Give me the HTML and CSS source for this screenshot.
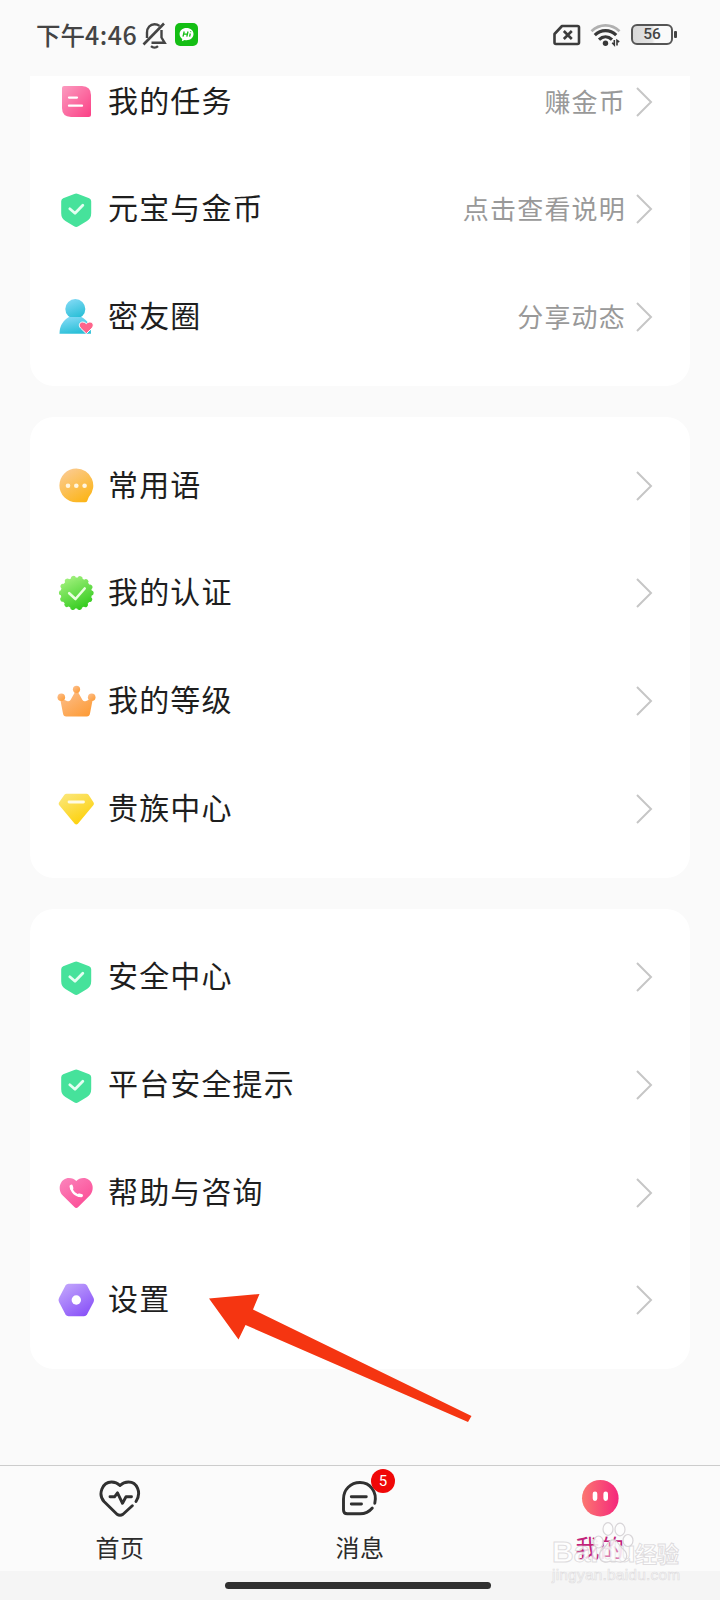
FILE: index.html
```html
<!DOCTYPE html>
<html lang="zh-CN">
<head>
<meta charset="utf-8">
<title>我的</title>
<link rel="stylesheet" href="styles.css">
</head>
<body>
<svg width="0" height="0" class="defs" aria-hidden="true">
  <defs>
    <linearGradient id="gPink" x1="0" y1="0" x2="1" y2="1"><stop offset="0" stop-color="#fb9cc0"/><stop offset="1" stop-color="#fb3f85"/></linearGradient>
    <linearGradient id="gBlue" x1="0" y1="0" x2="0.4" y2="1"><stop offset="0" stop-color="#8adcf8"/><stop offset="1" stop-color="#2cc0d8"/></linearGradient>
    <linearGradient id="gOrange" x1="0.2" y1="0" x2="0.8" y2="1"><stop offset="0" stop-color="#fbcb92"/><stop offset="1" stop-color="#fcb414"/></linearGradient>
    <linearGradient id="gGreen" x1="0.2" y1="0" x2="0.7" y2="1"><stop offset="0" stop-color="#a0f07c"/><stop offset="1" stop-color="#36cc20"/></linearGradient>
    <linearGradient id="gCrown" x1="0" y1="0" x2="0.8" y2="1"><stop offset="0" stop-color="#fcc294"/><stop offset="1" stop-color="#fd9c38"/></linearGradient>
    <linearGradient id="gYellow" x1="0.1" y1="0" x2="0.7" y2="1"><stop offset="0" stop-color="#fbe77c"/><stop offset="1" stop-color="#fdd005"/></linearGradient>
    <linearGradient id="gHeart" x1="0" y1="0" x2="0.8" y2="1"><stop offset="0" stop-color="#fb86bd"/><stop offset="1" stop-color="#fc4a94"/></linearGradient>
    <linearGradient id="gPurple" x1="0.1" y1="0" x2="0.8" y2="1"><stop offset="0" stop-color="#c3a8fc"/><stop offset="1" stop-color="#8850f8"/></linearGradient>
    <linearGradient id="gFace" x1="0" y1="0" x2="1" y2="0"><stop offset="0" stop-color="#fb7770"/><stop offset="1" stop-color="#f5267c"/></linearGradient>
    <symbol id="chev" viewBox="0 0 18 32"><path d="M2 2 16 16 2 30" fill="none" stroke="#c6c6c6" stroke-width="2"/></symbol>
    <symbol id="shield" viewBox="0 0 40 40"><path d="M18.3 4.9Q20.2 4 22.1 4.9L33.2 9.3Q35.2 10.1 35.2 12.2V24.2Q35.2 29.3 31 32L22.3 37.3Q20.2 38.5 18.1 37.3L9.4 32Q5.2 29.3 5.2 24.2V12.2Q5.2 10.1 7.2 9.3Z" fill="#46e29b"/><path d="M13.8 19.8 19 24.2 26.8 16.3" fill="none" stroke="#e4fff2" stroke-width="2.8" stroke-linecap="round" stroke-linejoin="round"/></symbol>
  </defs>
</svg>
<div class="screen">
  <header class="status">
    <span class="time">下午<b>4:46</b></span>
    <svg class="bell" width="25" height="27" viewBox="0 0 25 27" fill="none" stroke="#444" stroke-width="2.4"><path d="M5 16V10.500C5 5.500 8.300 2.200 12.500 2.200c2 0 3.600.6 5 1.700M19.500 8v7.500l3.200 5.300H9.500"/><path d="M1.500 22.500 22 1.500" stroke-width="2.600"/><path d="M9 24.200c2 1.800 5 1.800 7 0" stroke-width="2.400"/></svg>
    <svg class="app" width="23" height="23" viewBox="0 0 23 23"><rect width="23" height="23" rx="5" fill="#14be14"/><path d="M11.500 5C7.500 5 4.600 7.600 4.600 11c0 2 1 3.800 2.700 4.900l-.4 2.400 2.800-1.300c.6.100 1.200.2 1.800.2 4 0 7-2.700 7-6.200S15.500 5 11.500 5Z" fill="#fff"/><path d="M9.200 8.500 8 13.700M13 8.500l-1.200 5.200M8.600 11.200h3.800M15.300 10.500l-.7 3.200M15.700 8.400l-.1.700" stroke="#14be14" stroke-width="1.300"/></svg>
    <span class="spacer"></span>
    <svg class="sim" width="28" height="22" viewBox="0 0 28 22" fill="none" stroke="#3c3c3c"><path d="M9 2H24.500Q26 2 26 3.500V18.500Q26 20 24.500 20H3Q1.500 20 1.500 18.500V10Z" stroke-width="2.600" stroke-linejoin="round"/><path d="m10.800 7 8 8m0-8-8 8" stroke-width="2.600"/></svg>
    <svg class="wifi" width="32" height="25" viewBox="0 0 32 25" fill="none" stroke-width="2.700"><path d="M1.500 8.200C9.500.3 21.500.3 29.500 8.200" stroke="#b0b0b0"/><path d="M4.800 12.200c6.200-6 15.200-6 21.400 0M9 16.600c3.900-3.600 9.100-3.600 13 0" stroke="#383838" stroke-width="3.200"/><circle cx="15.500" cy="20.300" r="2.700" fill="#383838"/><path d="M22.200 19.800 24.300 22V17M29.200 19 27 17.300V22.500" stroke="#383838" stroke-width="1.600"/></svg>
    <span class="battery">56</span>
  </header>

  <main class="list">
    <section class="card">
      <div class="row"><svg class="ic" viewBox="0 0 40 40"><path d="M8 4H26Q35 4.500 35 13V32.500Q35 35 32.500 35H15Q6 34.500 6 26V6Q6 4 8 4Z" fill="url(#gPink)"/><path d="M13 15.600h8M13 23.700h13" stroke="#fff" stroke-width="2.300" stroke-linecap="round"/></svg><span class="name">我的任务</span><span class="note">赚金币</span><svg class="go"><use href="#chev"/></svg></div>
      <div class="row"><svg class="ic"><use href="#shield"/></svg><span class="name">元宝与金币</span><span class="note">点击查看说明</span><svg class="go"><use href="#chev"/></svg></div>
      <div class="row"><svg class="ic" viewBox="0 0 40 40"><circle cx="19.300" cy="12" r="10" fill="url(#gBlue)"/><path d="M13 20h12.500C31 23 35 28 35 36.700H3.500C3.500 28.500 7.500 23 13 20Z" fill="url(#gBlue)"/><path d="M30.300 36.700 24.500 31C22 28 23.800 25 26.700 25Q29 25 30.300 26.700 31.600 25 33.800 25C36.700 25 38.500 28 36.100 31Z" fill="#fe658b" stroke="#fff" stroke-width="1"/></svg><span class="name">密友圈</span><span class="note">分享动态</span><svg class="go"><use href="#chev"/></svg></div>
    </section>
    <section class="card">
      <div class="row"><svg class="ic" viewBox="0 0 40 40"><path d="M20.300 2.500a17 17 0 0 1 12.500 28.500L31.200 35Q30.700 36.300 29 36.300H20.300a16.900 16.900 0 0 1 0-33.800Z" fill="url(#gOrange)"/><g fill="#fff5df"><circle cx="12" cy="19.800" r="2.300"/><circle cx="20.300" cy="19.800" r="2.300"/><circle cx="28.600" cy="19.800" r="2.300"/></g></svg><span class="name">常用语</span><svg class="go"><use href="#chev"/></svg></div>
      <div class="row"><svg class="ic" viewBox="0 0 40 40"><circle cx="20.300" cy="20" r="15.600" fill="url(#gGreen)"/><circle cx="20.300" cy="20" r="14.900" fill="none" stroke="url(#gGreen)" stroke-width="5" stroke-linecap="round" stroke-dasharray="0.010 6.677"/><path d="m13.200 20.200 6.300 5.800L28.700 15.500" fill="none" stroke="#e9ffdf" stroke-width="2.600" stroke-linecap="round" stroke-linejoin="round"/></svg><span class="name">我的认证</span><svg class="go"><use href="#chev"/></svg></div>
      <div class="row"><svg class="ic" viewBox="0 0 40 40"><g fill="url(#gCrown)"><path d="M4 17 11 20Q13 21 14.500 19L18.500 12V8H22.500V12L26.500 19Q28 21 30 20L37 17 34 32.500Q33.600 35.500 30.800 35.500H10.200Q7.400 35.500 7 32.500Z"/><circle cx="20.500" cy="8.300" r="3.600"/><circle cx="5.300" cy="16.300" r="3.800"/><circle cx="35.700" cy="16.300" r="3.800"/></g></svg><span class="name">我的等级</span><svg class="go"><use href="#chev"/></svg></div>
      <div class="row"><svg class="ic" viewBox="0 0 40 40"><path d="M10.500 4.700H30.500Q31.800 4.700 32.600 5.700L37.600 13.600Q38.500 15 37.300 16.300L21.900 34.800Q20.300 36.400 18.700 34.800L3.300 16.300Q2.100 15 3 13.600L8.400 5.700Q9.200 4.700 10.500 4.700Z" fill="url(#gYellow)"/><path d="M13 13h14.500" stroke="#fffbe4" stroke-width="2.800" stroke-linecap="round"/></svg><span class="name">贵族中心</span><svg class="go"><use href="#chev"/></svg></div>
    </section>
    <section class="card">
      <div class="row"><svg class="ic"><use href="#shield"/></svg><span class="name">安全中心</span><svg class="go"><use href="#chev"/></svg></div>
      <div class="row"><svg class="ic"><use href="#shield"/></svg><span class="name">平台安全提示</span><svg class="go"><use href="#chev"/></svg></div>
      <div class="row"><svg class="ic" viewBox="0 0 40 40"><path d="M18.400 34 6.500 22.300C.5 15 5 5 13 5Q17.500 5 20.300 8 23 5 27.500 5C35.500 5 40 15 34 22.300L22.200 34Q20.300 35.800 18.400 34Z" fill="url(#gHeart)"/><path d="M15.300 13.500C15.300 18.500 19.500 22.800 25 22.800" fill="none" stroke="#fff" stroke-width="2.400"/><path d="m15.200 13.300.5 2M23.200 22.300l2.100.3" stroke="#fff" stroke-width="3.400" stroke-linecap="round"/></svg><span class="name">帮助与咨询</span><svg class="go"><use href="#chev"/></svg></div>
      <div class="row"><svg class="ic" viewBox="0 0 40 40"><path d="M12.500 3.700H28Q30 3.700 31 5.400L37.600 18Q38.500 20 37.600 22L31 34.500Q30 36.200 28 36.200H12.500Q10.500 36.200 9.500 34.500L3 22Q2 20 3 18L9.500 5.400Q10.500 3.700 12.500 3.700Z" fill="url(#gPurple)"/><circle cx="20.300" cy="20" r="4.700" fill="#fff"/></svg><span class="name">设置</span><svg class="go"><use href="#chev"/></svg></div>
    </section>
  </main>

  <nav class="tabs">
    <div class="tab"><svg width="44" height="40" viewBox="0 0 44 40" fill="none" stroke="#303030" stroke-width="2.900" stroke-linecap="round" stroke-linejoin="round"><path d="M34.300 26.700 25 35.200Q22 37.300 19 35.200L6 22.500C-.5 15 4.500 3 13.500 3Q18.500 3 22 6.500 25.500 3 30.500 3C39 3 43.800 13.500 38 22.500"/><path d="M12 17.800H16.500L19.500 13.800 24.500 24.300 28 17.800H33.500"/></svg><span>首页</span></div>
    <div class="tab"><svg width="44" height="40" viewBox="0 0 44 40" fill="none" stroke="#303030" stroke-width="2.900" stroke-linecap="round"><path d="M36.800 24.300C39.500 12 31.500 3.500 22 3.500 12.500 3.500 5.500 10.500 5.500 20V31Q5.500 34.800 9.300 34.800H22Q29.500 34.800 34.300 29"/><path d="M13.300 17.700H28.300M13.300 25H23.500"/></svg><span>消息</span><i class="badge">5</i></div>
    <div class="tab on"><svg width="44" height="40" viewBox="0 0 44 40"><circle cx="22.300" cy="19.200" r="18.300" fill="url(#gFace)"/><path d="M17 14.800v4.800M27.700 14.800v4.800" stroke="#fff" stroke-width="4.600" stroke-linecap="round"/></svg><span>我的</span></div>
  </nav>
  <footer class="gesture"><div class="pill"></div></footer>

  <svg class="arrow" width="264" height="130" viewBox="0 0 264 130"><path d="M0 4.500 50.500 0 44 15.500 262.500 122 259 128 36.500 31 29.500 45.500Z" fill="#f53511"/></svg>

  <div class="mark">
    <div class="brand"><span class="bai">Bai</span><span class="du">du</span><span class="jy">经验</span></div>
    <div class="site">jingyan.baidu.com</div>
    <svg class="paw" width="42" height="42" viewBox="0 0 42 42" fill="#fdfdfd" fill-opacity=".85" stroke="#d8d5d8" stroke-width="1.200"><ellipse cx="5.500" cy="20" rx="4.800" ry="6"/><ellipse cx="15" cy="7" rx="5" ry="6.300"/><ellipse cx="27" cy="7.500" rx="5" ry="6.300"/><ellipse cx="35" cy="18.500" rx="5" ry="6"/><path d="M20 18c5 0 6 6 10 9 7 6 3 14-4 13-4-1-8-1-12 0-7 1-11-7-4-13 4-3 5-9 10-9Z" fill-opacity=".4"/></svg>
  </div>
</div>
</body>
</html>
```

FILE: styles.css
```css
* { box-sizing: border-box; }
body {
  margin: 0;
  background: #fafafa;
  font-family: "Noto Sans CJK SC", sans-serif;
}
.defs { position: absolute; }
.screen {
  position: relative;
  width: 720px;
  height: 1600px;
  display: flex;
  flex-direction: column;
  overflow: hidden;
  background: #fafafa;
}

/* status bar */
.status {
  height: 76px;
  flex: none;
  display: flex;
  align-items: center;
  padding: 0 47px 6px 36px;
  color: #444;
}
.time { margin-top: -2px; font-size: 24.5px; line-height: 36px; font-weight: 500; white-space: nowrap; }
.time b { font-size: 25px; font-weight: 500; letter-spacing: .5px; }
.bell { margin: 0 0 0 5px; }
.app { margin-left: 8px; margin-top: -1px; }
.spacer { flex: 1; }
.wifi { margin-left: 9px; }
.battery {
  position: relative;
  width: 42px;
  height: 21px;
  margin-left: 9px;
  margin-top: -1px;
  border: 2px solid #555;
  border-radius: 6px;
  background: linear-gradient(90deg, #d8d8d8, #e4e4e4 50%, transparent 58%);
  font: 500 15.5px/17px Roboto, "Noto Sans CJK SC", sans-serif;
  text-align: center;
}
.battery::after {
  content: "";
  position: absolute;
  right: -6px;
  top: 5px;
  width: 3px;
  height: 7px;
  border-radius: 1px;
  background: #444;
}

/* menu cards */
.list {
  flex: none;
  height: 1389px;
  padding: 0 30px;
  overflow: hidden;
  display: flex;
  flex-direction: column;
  gap: 31px;
}
.card {
  flex: none;
  padding: 15px 37px 15px 26px;
  border-radius: 24px;
  background: #fff;
}
.card:first-child { margin-top: -43px; }
.row {
  height: 107.67px;
  display: flex;
  align-items: center;
}
.ic { width: 40px; height: 40px; flex: none; }
.name {
  flex: 1;
  margin: -6px 0 0 12px;
  font-size: 30px;
  line-height: 44px;
  letter-spacing: 1.15px;
  color: #1e1e1e;
}
.note {
  margin-top: -2px;
  font-size: 26px;
  line-height: 38px;
  letter-spacing: 1.2px;
  color: #999;
}
.go { width: 18px; height: 32px; margin-left: 9px; flex: none; }

/* tab bar */
.tabs {
  height: 106px;
  flex: none;
  display: flex;
  border-top: 1px solid #ccc;
  background: #fbfbfb;
}
.tab {
  position: relative;
  flex: 1;
  display: flex;
  flex-direction: column;
  align-items: center;
  padding-top: 13px;
  font-size: 24px;
  line-height: 36px;
  color: #2c2c2c;
}
.tab span { margin-top: 10px; letter-spacing: .5px; }
.on { color: #c2237a; }
.badge {
  position: absolute;
  left: 131px;
  top: 3px;
  width: 24px;
  height: 24px;
  border-radius: 50%;
  background: #f00808;
  color: #fff;
  font: 15px/24px Roboto, "Noto Sans CJK SC", sans-serif;
  text-align: center;
}
.gesture {
  flex: 1;
  display: flex;
  justify-content: center;
  padding: 11px 4px 0 0;
  background: #f5f5f5;
}
.pill { width: 266px; height: 7px; border-radius: 4px; background: #303030; }

/* annotation and watermark over the screen */
.arrow { position: absolute; left: 209px; top: 1294px; }
.mark {
  position: absolute;
  left: 552px;
  top: 1535px;
  width: 132px;
  color: rgba(255, 255, 255, .8);
  font-family: "Liberation Sans", "Noto Sans CJK SC", sans-serif;
  -webkit-text-stroke: 1px rgba(210, 207, 210, .7);
}
.brand { display: flex; align-items: center; height: 34px; font-size: 30px; font-weight: 700; }
.bai { width: 47px; }
.du { width: 36px; }
.jy { font: 700 22px/34px "Noto Sans CJK SC", sans-serif; }
.site {
  margin-top: -3px;
  font-size: 15.5px;
  line-height: 17px;
  letter-spacing: .2px;
  white-space: nowrap;
  -webkit-text-stroke: .7px rgba(215, 213, 215, .75);
}
.paw { position: absolute; left: 41px; top: -13px; }
```
